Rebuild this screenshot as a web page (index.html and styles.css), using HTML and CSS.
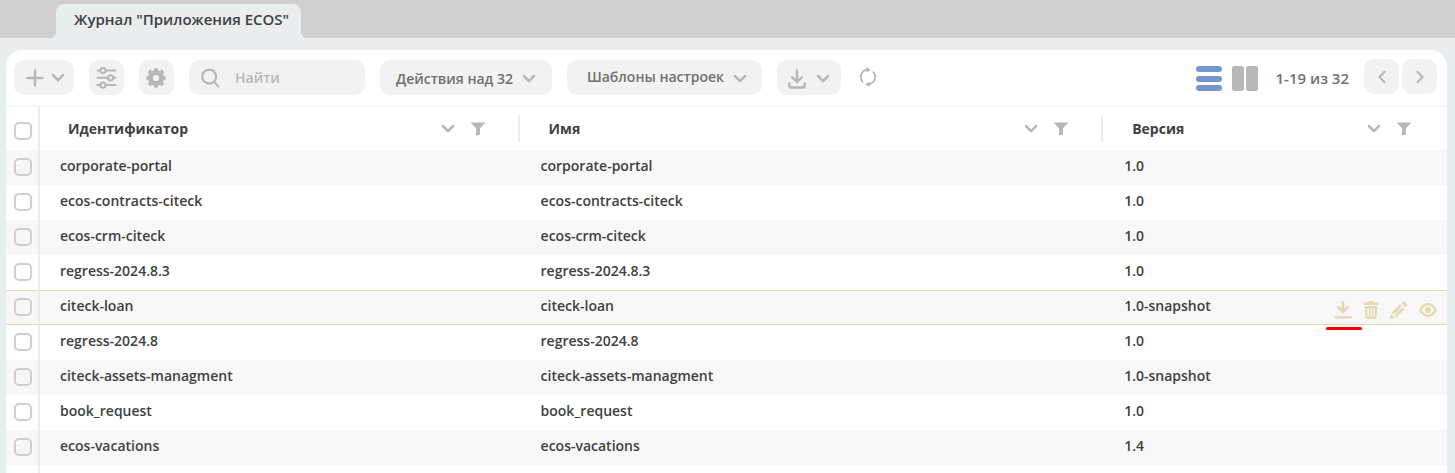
FILE: index.html
```html
<!DOCTYPE html>
<html lang="ru">
<head>
<meta charset="utf-8">
<meta name="viewport" content="width=device-width, initial-scale=1">
<title>Журнал "Приложения ECOS"</title>
<link rel="stylesheet" href="styles.css">
</head>
<body>
<svg class="sprite" aria-hidden="true">
  <symbol id="chevron" viewBox="0 0 14 10"><path d="M2 2.2 7 7.2 12 2.2" fill="none" stroke="currentColor" stroke-width="2.6" stroke-linecap="round" stroke-linejoin="round"/></symbol>
  <symbol id="filter" viewBox="0 0 16 14"><path d="M0.5 0.5H15.5L10 6.2V12.6L6 13.5V6.2Z" fill="currentColor"/></symbol>
</svg>

<nav class="tabs">
  <a class="tab" href="#" aria-current="page">Журнал "Приложения ECOS"</a>
</nav>

<main class="panel">
  <div class="toolbar">
    <button class="btn btn-add" type="button" aria-label="Создать">
      <svg width="18" height="18" viewBox="0 0 18 18"><path d="M9 1.5V16.5M1.5 9H16.5" stroke="currentColor" stroke-width="2.4" stroke-linecap="round"/></svg>
      <svg width="14" height="10"><use href="#chevron"/></svg>
    </button>
    <button class="btn btn-icon" type="button" aria-label="Настройка таблицы">
      <svg width="21" height="22" viewBox="0 0 21 22" fill="none" stroke="currentColor" stroke-width="2" stroke-linecap="round"><path d="M1.5 3.5H4M10 3.5H19.5M1.5 10.8H12M18 10.8H19.5M1.5 18.1H4M10 18.1H19.5"/><circle cx="7" cy="3.5" r="2.6"/><circle cx="14.6" cy="10.8" r="2.6"/><circle cx="7" cy="18.1" r="2.6"/></svg>
    </button>
    <button class="btn btn-icon" type="button" aria-label="Настройки">
      <svg width="21" height="20" viewBox="0 0 21 20"><g fill="none" stroke="currentColor"><circle cx="10" cy="10" r="5.4" stroke-width="4.6"/></g><g stroke="currentColor" stroke-width="4.4" stroke-linecap="round"><path d="M10 2.2V3.6M10 16.4V17.8M2.2 10H3.6M16.4 10H17.8M4.2 4.2 5.3 5.3M14.7 14.7 15.8 15.8M4.2 15.8 5.3 14.7M14.7 5.3 15.8 4.2"/></g></svg>
    </button>
    <label class="search">
      <svg width="19" height="20" viewBox="0 0 19 20" fill="none" stroke="currentColor" stroke-width="2.2" stroke-linecap="round"><circle cx="8.2" cy="8.6" r="7"/><path d="M13.2 14 17.4 18.4"/></svg>
      <input type="text" placeholder="Найти" aria-label="Найти">
    </label>
    <button class="btn btn-menu" type="button"><span>Действия над 32</span><svg width="14" height="10"><use href="#chevron"/></svg></button>
    <button class="btn btn-menu btn-templates" type="button"><span>Шаблоны настроек</span><svg width="14" height="10"><use href="#chevron"/></svg></button>
    <button class="btn btn-export" type="button" aria-label="Экспорт">
      <svg width="18" height="20" viewBox="0 0 18 20" fill="none" stroke="currentColor" stroke-width="2.4" stroke-linecap="round" stroke-linejoin="round"><path d="M9 1.5V12M4.2 8.3 9 13 13.8 8.3M1.3 14.5V16.5Q1.3 18.5 3.3 18.5H14.7Q16.7 18.5 16.7 16.5V14.5"/></svg>
      <svg width="14" height="10"><use href="#chevron"/></svg>
    </button>
    <button class="plain refresh" type="button" aria-label="Обновить">
      <svg width="18" height="20" viewBox="0 0 18 20"><g fill="none" stroke="currentColor" stroke-width="1.8" stroke-linecap="round"><path d="M3.6 14.8A7.3 7.3 0 0 1 9 2.7"/><path d="M14.4 5.2A7.3 7.3 0 0 1 9 17.3"/></g><path d="M7.5 .2 12 2.9 7.5 5.3ZM10.5 14.7V19.8L6 17.3Z" fill="currentColor"/></svg>
    </button>
    <div class="paging">
      <button class="plain view-list" type="button" aria-label="Список">
        <svg width="26" height="26" viewBox="0 0 26 26" fill="currentColor"><rect y="0" width="26" height="6" rx="3"/><rect y="10" width="26" height="6" rx="3"/><rect y="19" width="26" height="6" rx="3"/></svg>
      </button>
      <button class="plain view-split" type="button" aria-label="Предпросмотр">
        <svg width="26" height="26" viewBox="0 0 26 26" fill="currentColor"><rect width="12" height="25" rx="2.5"/><rect x="14" width="12" height="25" rx="2.5"/></svg>
      </button>
      <span class="range">1-19 из 32</span>
      <button class="btn btn-page" type="button" aria-label="Назад"><svg width="8" height="14" viewBox="0 0 8 14"><path d="M6.5 1.8 1.5 7 6.5 12.2" fill="none" stroke="currentColor" stroke-width="2.2" stroke-linecap="round"/></svg></button>
      <button class="btn btn-page" type="button" aria-label="Вперёд"><svg width="8" height="14" viewBox="0 0 8 14"><path d="M1.5 1.8 6.5 7 1.5 12.2" fill="none" stroke="currentColor" stroke-width="2.2" stroke-linecap="round"/></svg></button>
    </div>
  </div>

  <table class="grid">
    <colgroup><col class="col-check"><col class="col-id"><col class="col-name"><col></colgroup>
    <thead>
      <tr>
        <th class="check"><input type="checkbox" aria-label="Выбрать все"></th>
        <th><div class="head"><span>Идентификатор</span><svg width="14" height="10"><use href="#chevron"/></svg><svg width="16" height="14"><use href="#filter"/></svg></div></th>
        <th><div class="head"><span>Имя</span><svg width="14" height="10"><use href="#chevron"/></svg><svg width="16" height="14"><use href="#filter"/></svg></div></th>
        <th><div class="head"><span>Версия</span><svg width="14" height="10"><use href="#chevron"/></svg><svg width="16" height="14"><use href="#filter"/></svg></div></th>
      </tr>
    </thead>
    <tbody>
      <tr><td class="check"><input type="checkbox" aria-label="corporate-portal"></td><td>corporate-portal</td><td>corporate-portal</td><td>1.0</td></tr>
      <tr><td class="check"><input type="checkbox" aria-label="ecos-contracts-citeck"></td><td>ecos-contracts-citeck</td><td>ecos-contracts-citeck</td><td>1.0</td></tr>
      <tr><td class="check"><input type="checkbox" aria-label="ecos-crm-citeck"></td><td>ecos-crm-citeck</td><td>ecos-crm-citeck</td><td>1.0</td></tr>
      <tr><td class="check"><input type="checkbox" aria-label="regress-2024.8.3"></td><td>regress-2024.8.3</td><td>regress-2024.8.3</td><td>1.0</td></tr>
      <tr class="active"><td class="check"><input type="checkbox" aria-label="citeck-loan"></td><td>citeck-loan</td><td>citeck-loan</td><td>1.0-snapshot
        <div class="actions">
          <button class="plain marked" type="button" aria-label="Скачать"><svg width="18" height="18" viewBox="0 0 18 18" fill="none" stroke="currentColor" stroke-width="2.6"><path d="M9 0V10.5M3.6 5.6 9 11 14.4 5.6"/><path d="M1.3 16.4H16.7" stroke-width="2.2" stroke-linecap="round"/></svg></button>
          <button class="plain" type="button" aria-label="Удалить"><svg width="16" height="18" viewBox="0 0 16 18" fill="currentColor"><path d="M5.5 0H10.5V1.5H15.5V4H.5V1.5H5.5Z"/><path fill-rule="evenodd" d="M1.8 5H14.2L13.6 16.5Q13.5 18 12 18H4Q2.5 18 2.4 16.5ZM4.4 7V15.5H5.8V7ZM7.3 7V15.5H8.7V7ZM10.2 7V15.5H11.6V7Z"/></svg></button>
          <button class="plain" type="button" aria-label="Изменить"><svg width="18" height="18" viewBox="0 0 18 18" fill="currentColor"><path d="M11.8 2.2 13.3.7Q14 0 14.7.7L17.3 3.3Q18 4 17.3 4.7L15.8 6.2Z"/><path d="M10 3.2 12.1 5.3 3.8 13.6 1.7 11.5ZM12.7 5.9 14.8 8 6.5 16.3 4.4 14.2ZM1 12.8 5.2 17 0 18Z"/></svg></button>
          <button class="plain" type="button" aria-label="Просмотр"><svg width="18" height="14" viewBox="0 0 18 14" fill="none"><path d="M1.2 7Q4.2 1.3 9 1.3T16.8 7Q13.8 12.7 9 12.7T1.2 7Z" stroke="currentColor" stroke-width="2.4"/><circle cx="9" cy="7" r="2.9" fill="currentColor"/></svg></button>
        </div>
      </td></tr>
      <tr><td class="check"><input type="checkbox" aria-label="regress-2024.8"></td><td>regress-2024.8</td><td>regress-2024.8</td><td>1.0</td></tr>
      <tr><td class="check"><input type="checkbox" aria-label="citeck-assets-managment"></td><td>citeck-assets-managment</td><td>citeck-assets-managment</td><td>1.0-snapshot</td></tr>
      <tr><td class="check"><input type="checkbox" aria-label="book_request"></td><td>book_request</td><td>book_request</td><td>1.0</td></tr>
      <tr><td class="check"><input type="checkbox" aria-label="ecos-vacations"></td><td>ecos-vacations</td><td>ecos-vacations</td><td>1.4</td></tr>
    </tbody>
  </table>
  <div class="rest"></div>
</main>
</body>
</html>
```

FILE: styles.css
```css
* { box-sizing: border-box; }

body {
  display: flex;
  flex-direction: column;
  min-height: 100vh;
  margin: 0;
  background: #e8edf0;
  color: #404040;
  font: 560 14px/20px "Open Sans", "Noto Sans", sans-serif;
}

button, input { margin: 0; font: inherit; }
svg { display: block; flex: none; }
.sprite { position: absolute; width: 0; height: 0; }

/* Tabs */
.tabs {
  display: flex;
  padding: 4px 56px 0;
  background: #cfcfcf;
}
.tab {
  position: relative;
  padding: 5px 12px 9px 18px;
  border-radius: 8px 8px 0 0;
  background: #e8edf0;
  color: inherit;
  font-size: 15px;
  font-weight: 600;
  text-decoration: none;
}
.tab::before, .tab::after {
  content: "";
  position: absolute;
  bottom: 0;
  width: 6px;
  height: 6px;
}
.tab::before { right: 100%; background: radial-gradient(circle at 0 0, #cfcfcf 6px, #e8edf0 6px); }
.tab::after { left: 100%; background: radial-gradient(circle at 100% 0, #cfcfcf 6px, #e8edf0 6px); }

/* Panel */
.panel {
  display: flex;
  flex: 1;
  flex-direction: column;
  margin: 12px 8px 0 6px;
  overflow: hidden;
  border-radius: 16px 16px 0 0;
  background: #fff;
}

/* Toolbar */
.toolbar {
  display: flex;
  align-items: flex-end;
  gap: 15px;
  padding: 9px 10px 10px 8px;
  border-bottom: 2px solid #f7f7f7;
}
.btn {
  display: flex;
  align-items: center;
  justify-content: center;
  height: 35px;
  padding: 0;
  border: 0;
  border-radius: 10px;
  background: #f2f2f2;
  color: #b7b7b7;
}
.btn span { color: #707070; }
.btn-add { gap: 7px; width: 60px; padding-left: 2px; }
.btn-icon, .btn-page { width: 35px; }
.btn-menu { gap: 9px; padding: 2px 16px 0; }
.btn-templates { padding: 0 15px 2px 20px; }
.btn-templates svg { margin-top: 4px; }
.btn-export { gap: 10px; width: 64px; padding-top: 2px; }
.plain {
  display: flex;
  padding: 0;
  border: 0;
  background: none;
  color: #b7b7b7;
}
.refresh { align-self: center; margin-left: 3px; }
.search {
  display: flex;
  align-items: center;
  gap: 15px;
  width: 176px;
  height: 35px;
  padding: 0 12px;
  border-radius: 10px;
  background: #f2f2f2;
  color: #b7b7b7;
}
.search input {
  flex: 1;
  min-width: 0;
  padding: 0;
  border: 0;
  outline: 0;
  background: none;
  color: #707070;
}
.search input::placeholder { color: #b7b7b7; opacity: 1; }
.paging {
  display: flex;
  align-items: center;
  margin-left: auto;
}
.paging .plain { margin-top: 3px; }
.view-list { margin-right: 10px; }
.paging .view-list { color: #7396cd; }
.range {
  margin: 0 15px 0 18px;
  padding-top: 1px;
  color: #707070;
  font-size: 15px;
  font-weight: 600;
}
.btn-page { margin-bottom: 1px; }
.btn-page + .btn-page { margin-left: 3px; }

/* Table */
.grid {
  width: 100%;
  table-layout: fixed;
  border-collapse: separate;
  border-spacing: 0;
}
.col-check { width: 34px; }
.col-id { width: 33.35%; }
.col-name { width: 40.5%; }
th { position: relative; height: 43px; padding: 0; text-align: left; }
th:not(:first-child):not(:last-child)::after {
  content: "";
  position: absolute;
  top: 8px;
  right: 1px;
  width: 2px;
  height: 27px;
  background: #e8edf0;
}
.head {
  display: flex;
  align-items: center;
  padding: 0 35px 0 28px;
  font-weight: 680;
}
.head span { flex: 1; }
.head svg { color: #b7b7b7; }
.head svg + svg { margin-left: 15px; }
td { height: 35px; padding: 0 20px 3px; }
tbody tr:nth-child(odd) { background: #f7f7f7; }
.check {
  padding: 0 0 1px 8px;
  border-right: 2px solid #e8edf0;
}
th.check { padding: 4px 0 0 8px; }
.check input {
  display: block;
  width: 18px;
  height: 18px;
  border: 2px solid #cfcfcf;
  border-radius: 5px;
  background: transparent;
  appearance: none;
}
.check input:checked { background: #7396cd; }
.active td {
  position: relative;
  border-top: 1px solid #e5d9b0;
  border-bottom: 1px solid #e5d9b0;
}
.actions {
  position: absolute;
  top: 10px;
  right: 10px;
  display: flex;
  align-items: center;
  gap: 11px;
}
.actions .plain { position: relative; color: #e5d9b0; }
.marked::after {
  content: "";
  position: absolute;
  top: 26px;
  left: -8px;
  z-index: 1;
  width: 36px;
  height: 3px;
  border-radius: 2px;
  background: #f00;
}
.rest {
  flex: 1;
  width: 34px;
  border-right: 2px solid #e8edf0;
}
```
